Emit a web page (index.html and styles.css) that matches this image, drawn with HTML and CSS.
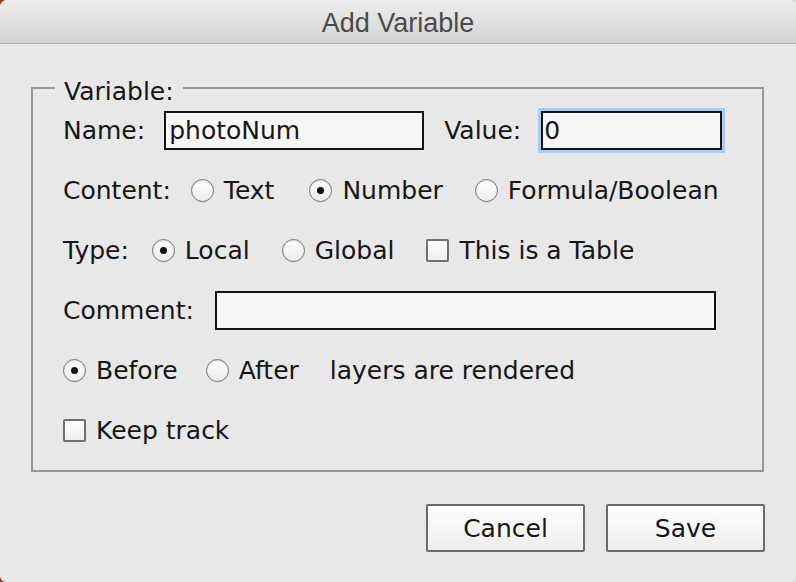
FILE: index.html
```html
<!DOCTYPE html>
<html lang="en">
<head>
<meta charset="utf-8">
<title>Add Variable</title>
<link rel="stylesheet" href="styles.css">
</head>
<body>
<div class="window">
  <header class="titlebar">Add Variable</header>
  <fieldset class="group">
    <legend class="group-legend">Variable:</legend>
    <div class="row row-first">
      <span class="label">Name:</span>
      <input class="field field-name" type="text" value="photoNum">
      <span class="label label-value">Value:</span>
      <input class="field field-value" type="text" value="0">
    </div>
    <div class="row">
      <span class="label">Content:</span>
      <div class="options">
        <label class="opt opt-text"><span class="radio"></span>Text</label>
        <label class="opt"><span class="radio checked"></span>Number</label>
        <label class="opt"><span class="radio"></span>Formula/Boolean</label>
      </div>
    </div>
    <div class="row">
      <span class="label label-type">Type:</span>
      <div class="options">
        <label class="opt"><span class="radio checked"></span>Local</label>
        <label class="opt"><span class="radio"></span>Global</label>
        <label class="opt"><span class="check"></span>This is a Table</label>
      </div>
    </div>
    <div class="row">
      <span class="label">Comment:</span>
      <input class="field field-comment" type="text" value="">
    </div>
    <div class="row">
      <div class="options options-tight">
        <label class="opt"><span class="radio checked"></span>Before</label>
        <label class="opt"><span class="radio"></span>After</label>
        <span class="note">layers are rendered</span>
      </div>
    </div>
    <div class="row">
      <label class="opt"><span class="check"></span>Keep track</label>
    </div>
  </fieldset>
  <div class="actions">
    <button class="btn" type="button">Cancel</button>
    <button class="btn" type="button">Save</button>
  </div>
</div>
</body>
</html>
```

FILE: styles.css
```css
html {
  background: linear-gradient(90deg, #b52a22 0 50%, #d8d8d8 50% 100%);
}
body {
  margin: 0;
  font-family: "DejaVu Sans", sans-serif;
  font-size: 25px;
  color: #161616;
}
.window {
  width: 796px;
  height: 582px;
  background: #e8e8e8;
  border-radius: 7px 7px 6px 6px;
  overflow: hidden;
}
.titlebar {
  box-sizing: border-box;
  height: 44px;
  padding-top: 3px;
  border-bottom: 1px solid #a9a9a9;
  background: linear-gradient(#ededed, #d4d4d4);
  font-family: "Liberation Sans", Arial, sans-serif;
  font-size: 27px;
  line-height: 40px;
  text-align: center;
  color: #4a4a4a;
}
.group {
  margin: 25px 32px 0 31px;
  padding: 0 31px 20px 30px;
  border: 2px solid #979797;
  min-width: 0;
}
.group-legend {
  padding: 8px 9px 0 9px;
  margin-left: -8px;
  line-height: 30px;
}
.row {
  display: flex;
  align-items: center;
  height: 40px;
  margin-top: 20px;
  white-space: nowrap;
}
.row-first {
  margin-top: 3px;
}
.label {
  margin-right: 20px;
}
.label-type {
  margin-right: 23px;
}
.label-value {
  margin-left: 20px;
  margin-right: 20px;
}
.field {
  box-sizing: border-box;
  height: 39px;
  border: 2px solid #141414;
  background: #f6f6f6;
  font: inherit;
  color: #161616;
  padding: 0 3px;
  margin: 0;
  outline: none;
}
.field-name {
  width: 260px;
  margin-left: -1px;
}
.field-value {
  width: 181px;
  padding-left: 1px;
  box-shadow: 0 0 0 3px #a9cdf1;
}
.field-comment {
  width: 501px;
  margin-left: 1px;
}
.options {
  display: flex;
  align-items: center;
  gap: 32px;
}
.options-tight {
  gap: 28px;
}
.opt {
  display: flex;
  align-items: center;
  gap: 10px;
}
.opt-text {
  margin-right: 3px;
}
.note {
  margin-left: 3px;
}
.radio {
  box-sizing: border-box;
  width: 23px;
  height: 23px;
  border-radius: 50%;
  border: 1px solid #777;
  background: linear-gradient(#ffffff, #ebebeb);
  box-shadow: inset 0 1px 1px rgba(0,0,0,0.15), 0 0.5px 0.5px rgba(0,0,0,0.1);
  display: grid;
  place-items: center;
}
.radio.checked::after {
  content: "";
  width: 7px;
  height: 7px;
  border-radius: 50%;
  background: #111;
}
.check {
  box-sizing: border-box;
  width: 23px;
  height: 23px;
  border: 2px solid #6f6f6f;
  border-radius: 2px;
  background: linear-gradient(#ffffff, #eeeeee);
}
.actions {
  display: flex;
  justify-content: flex-end;
  gap: 21px;
  margin: 32px 31px 0 0;
}
.btn {
  box-sizing: border-box;
  width: 159px;
  height: 48px;
  border: 2px solid #6a6a6a;
  border-radius: 2px;
  background: linear-gradient(#ffffff, #f6f6f6 50%, #ededed);
  font: inherit;
  color: #161616;
  padding: 0;
}
```
